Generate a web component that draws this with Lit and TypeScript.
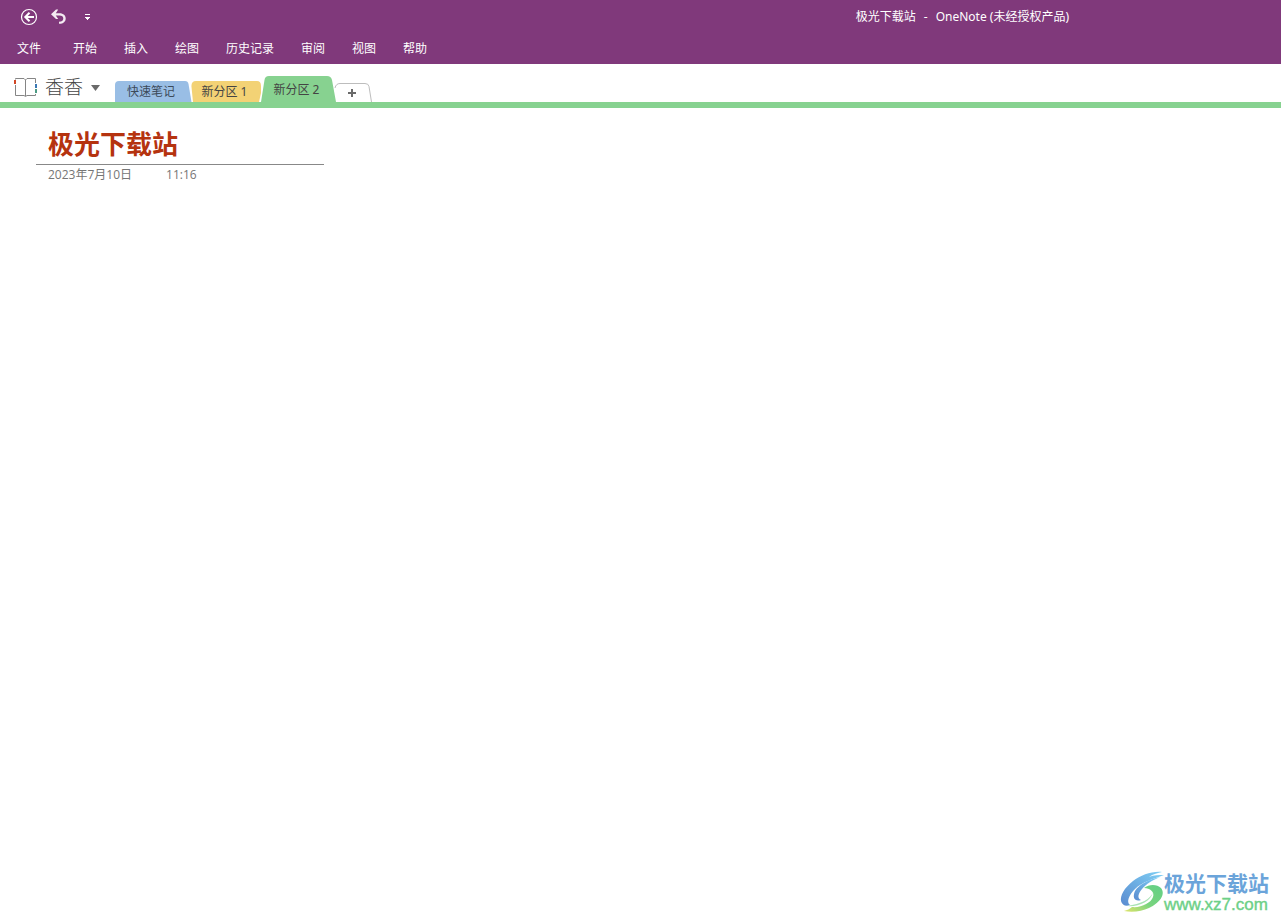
import { LitElement, html, css, svg } from "lit";
import { customElement, state } from "lit/decorators.js";
import { classMap } from "lit/directives/class-map.js";

interface Section {
  name: string;
  kind: string;
  view: string;
  path: string;
}

const MENU = ["开始", "插入", "绘图", "历史记录", "审阅", "视图", "帮助"];

const SECTIONS: Section[] = [
  { name: "快速笔记", kind: "blue", view: "0 0 76 21", path: "M0 21V4Q0 0 4 0H70Q73 0 73.500 3L76.500 21Z" },
  { name: "新分区 1", kind: "yellow", view: "0 0 71 21", path: "M2 21L0.500 6Q0 0 5 0H66Q70 0 70 5V12L68 21Z" },
  { name: "新分区 2", kind: "green", view: "0 0 73 26", path: "M-1 26L2.500 4Q3 0 7 0H65Q69 0 70 4L74 26Z" },
];

@customElement("app-root")
export class AppRoot extends LitElement {
  static styles = css`
    :host {
      display: flex;
      flex-direction: column;
      min-height: 100vh;
      background: #fff;
      font: 12px/16px "Open Sans", "Noto Sans CJK SC", sans-serif;
      color: #444;
    }
    button {
      border: 0;
      margin: 0;
      padding: 0;
      background: none;
      font: inherit;
      color: inherit;
      display: flex;
      align-items: center;
      justify-content: center;
      white-space: nowrap;
    }
    svg {
      display: block;
      overflow: visible;
    }
    .top {
      background: #80397b;
      color: #fff;
      height: 64px;
    }
    .titlebar {
      display: flex;
      align-items: center;
      height: 33px;
      padding-left: 20px;
    }
    .quick {
      display: flex;
      align-items: center;
      gap: 13px;
    }
    .caption {
      display: flex;
      gap: 8px;
      margin-left: auto;
      margin-right: 212px;
      font-family: "Noto Sans", "Noto Sans CJK SC", sans-serif;
    }
    .menu {
      display: flex;
      gap: 27px;
      height: 31px;
      padding-left: 17px;
    }
    .file {
      margin-right: 5px;
    }
    .sections {
      display: flex;
      align-items: flex-end;
      height: 38px;
      border-bottom: 6px solid #87d290;
    }
    .notebook {
      height: 30px;
      width: 101px;
      margin-right: 14px;
      padding-left: 14px;
      justify-content: flex-start;
      gap: 8px;
    }
    .book-name {
      font-size: 19px;
      line-height: 28px;
      font-weight: 300;
    }
    .tab {
      position: relative;
      height: 21px;
      font-family: "Noto Sans", "Noto Sans CJK SC", sans-serif;
    }
    .tab svg {
      position: absolute;
      inset: 0;
      width: 100%;
      height: 100%;
    }
    .tab span {
      position: relative;
    }
    .blue {
      width: 76px;
      padding-right: 4px;
      color: #3c4a5a;
    }
    .blue path {
      fill: #99bee5;
    }
    .yellow {
      width: 71px;
      padding-right: 4px;
    }
    .yellow path {
      fill: #f3d275;
    }
    .green {
      width: 73px;
      padding-right: 4px;
    }
    .green path {
      fill: #87d290;
    }
    .current {
      height: 26px;
      padding-top: 2px;
    }
    .add {
      width: 37px;
      height: 19px;
    }
    .page {
      flex: 1;
      padding: 12px 36px;
    }
    .heading {
      width: 288px;
      border-bottom: 1px solid #888;
    }
    h1 {
      margin: 0;
      padding: 8px 12px 4px;
      font-size: 26px;
      line-height: 32px;
      font-weight: 700;
      color: #b5330f;
    }
    .stamp {
      display: flex;
      gap: 34px;
      padding: 2px 12px;
      color: #767676;
    }
    .brand {
      display: flex;
      align-items: center;
      align-self: flex-end;
      padding: 0 12px 7px 0;
      text-decoration: none;
    }
    .brand-text {
      display: flex;
      flex-direction: column;
    }
    .brand-name {
      font-size: 21px;
      line-height: 24px;
      font-weight: 700;
      color: #6ba4da;
    }
    .brand-site {
      font-family: "Liberation Sans", sans-serif;
      font-size: 17px;
      line-height: 20px;
      color: #6dd087;
      -webkit-text-stroke: 0.4px #6dd087;
    }
  `;

  @state() private current = 2;

  private tab(s: Section, i: number) {
    return html`<button
      class=${classMap({ tab: true, [s.kind]: true, current: i === this.current })}
      @click=${() => (this.current = i)}
    >
      <svg viewBox=${s.view} preserveAspectRatio="none" aria-hidden="true">${svg`<path d=${s.path} />`}</svg>
      <span>${s.name}</span>
    </button>`;
  }

  render() {
    return html`
      <header class="top">
        <div class="titlebar">
          <div class="quick">
            <button aria-label="返回">
              <svg width="18" height="18" viewBox="0 0 18 18" fill="none" stroke="#fff">
                <circle cx="9" cy="9" r="7.500" stroke-width="1.200" />
                <path d="M14 9H5.500M9.500 4.800L5.300 9L9.500 13.200" stroke-width="2" />
              </svg>
            </button>
            <button aria-label="撤销">
              <svg width="16" height="16" viewBox="0 0 16 16" fill="#f3ebf2">
                <path d="M0 5.200L5 0.500H7.200L4.800 4.200H8.500C12.500 4.200 14.700 6.500 14.700 9.500C14.700 12.800 12 15 8 14.800V12.800C10.800 12.800 12.300 11.500 12.300 9.500C12.300 7.400 11 6.400 8.500 6.400H4.800L7.200 10H5Z" />
              </svg>
            </button>
            <button aria-label="自定义快速访问工具栏">
              <svg width="15" height="16" viewBox="0 0 15 16" fill="#fff">
                <path d="M5 5h5v1H5zM5 8h5v1H9v1H8v1H7v-1H6v-1H5z" />
              </svg>
            </button>
          </div>
          <div class="caption"><span>极光下载站</span><span>-</span><span>OneNote (未经授权产品)</span></div>
        </div>
        <nav class="menu">
          <button class="file">文件</button>
          ${MENU.map((m) => html`<button>${m}</button>`)}
        </nav>
      </header>
      <nav class="sections">
        <button class="notebook">
          <svg width="23" height="20" viewBox="0 0 23 20" fill="none">
            <path d="M1.500 8V18.500H10L11.500 19.500L13 18.500H21.500V17M21.500 6V1.500H13L11.500 3L10 1.500H1.500V2.500M11.500 3V19" stroke="#858585" />
            <path d="M0 3h2v4H0z" fill="#d24726" />
            <path d="M21 7h2v4h-2z" fill="#3a78b5" />
            <path d="M21 12h2v4h-2z" fill="#4c9b83" />
          </svg>
          <span class="book-name">香香</span>
          <svg width="9" height="6" viewBox="0 0 9 6"><path d="M0 1H9L4.500 7Z" fill="#6a6a6a" /></svg>
        </button>
        ${SECTIONS.map((s, i) => this.tab(s, i))}
        <button class="add" aria-label="新建分区">
          <svg width="37" height="19" viewBox="0 0 37 19" fill="none">
            <path d="M0 5Q1 0.500 5 0.500H30Q33.500 0.500 34 3.500L36.500 19" stroke="#bdbdbd" />
            <path d="M13 10H21M17 6V14" stroke="#6a6a6a" stroke-width="2" />
          </svg>
        </button>
      </nav>
      <main class="page">
        <div class="heading"><h1>极光下载站</h1></div>
        <div class="stamp"><span>2023年7月10日</span><span>11:16</span></div>
      </main>
      <a class="brand" href="#">
        <svg width="43" height="42" viewBox="0 0 43 42" aria-hidden="true">
          <defs>
            <linearGradient id="sky" x1="0" y1="1" x2="1" y2="0">
              <stop offset="0" stop-color="#5a8bd0" />
              <stop offset="1" stop-color="#7fd0f5" />
            </linearGradient>
            <linearGradient id="leaf" x1="0" y1="1" x2="1" y2="0">
              <stop offset="0" stop-color="#e2e56b" />
              <stop offset="0.450" stop-color="#79d47e" />
              <stop offset="1" stop-color="#62cf86" />
            </linearGradient>
          </defs>
          <path d="M41 0C31 -1 20 3 12 9C3 16 -1 24 0 29C1 33 5 35 9 33C5 30 8 23 14 17C21 10 32 7 43 3C38 3 33 3 28 5C32 2 37 1 41 0Z" fill="url(#sky)" />
          <path d="M39 5C29 7 18 12 14 19C11 26 14 30 20 28C16 26 17 22 21 17C25 12 32 8 39 5Z" fill="url(#sky)" />
          <path d="M23 16C28 12 36 12 40 16C45 22 39 31 28 36C21 39 12 41 3 39C6 38 9 37 11 35C20 36 30 31 32 25C34 20 29 16 23 16Z" fill="url(#leaf)" />
          <path d="M32 20C30 27 20 32 6 34C17 35 30 30 32 20Z" fill="#a8e3b4" />
        </svg>
        <span class="brand-text">
          <span class="brand-name">极光下载站</span>
          <span class="brand-site">www.xz7.com</span>
        </span>
      </a>
    `;
  }
}
